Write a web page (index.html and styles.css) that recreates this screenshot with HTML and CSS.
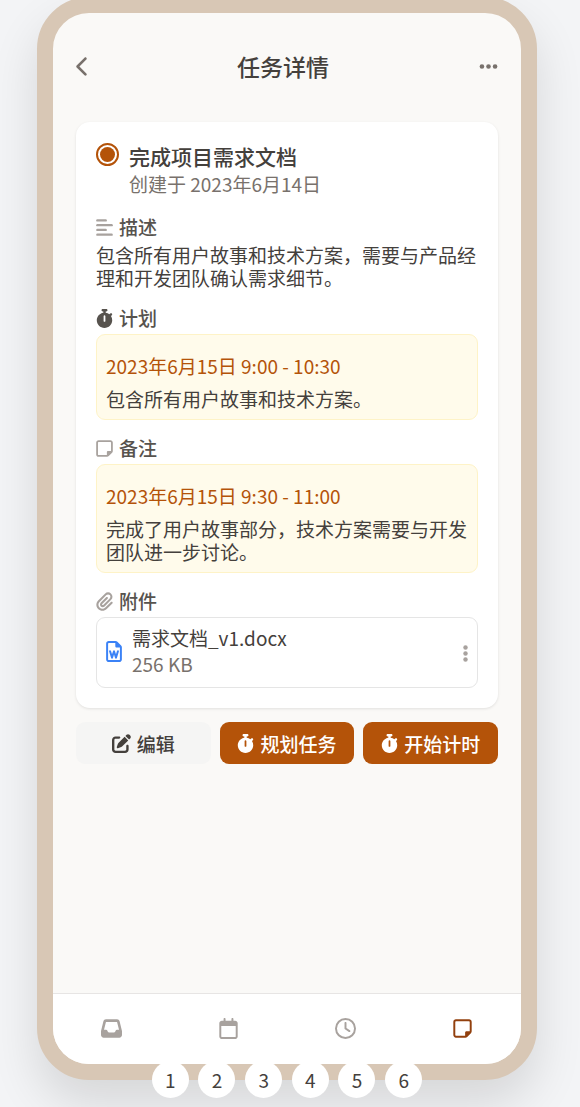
FILE: index.html
```html
<!DOCTYPE html>
<html lang="zh-CN">
<head>
<meta charset="utf-8">
<meta name="viewport" content="width=device-width, initial-scale=1">
<title>任务详情</title>
<link rel="stylesheet" href="styles.css">
</head>
<body>
<svg class="sprite" aria-hidden="true">
  <symbol id="stopwatch" viewBox="0 0 448 512"><path d="M176 0c-17.7 0-32 14.3-32 32s14.3 32 32 32l16 0 0 34.4C92.3 113.8 16 200 16 304c0 114.9 93.1 208 208 208s208-93.1 208-208c0-41.8-12.3-80.7-33.5-113.2l24.1-24.1c12.5-12.5 12.5-32.8 0-45.3s-32.8-12.5-45.3 0L355.7 143c-28.1-23-62.2-38.8-99.7-44.6L256 64l16 0c17.7 0 32-14.3 32-32s-14.3-32-32-32L224 0 176 0zm72 192l0 128c0 13.3-10.7 24-24 24s-24-10.7-24-24l0-128c0-13.3 10.7-24 24-24s24 10.7 24 24z"/></symbol>
  <symbol id="note" viewBox="0 0 448 512"><path d="M64 80c-8.8 0-16 7.2-16 16l0 320c0 8.8 7.2 16 16 16l224 0 0-80c0-17.7 14.3-32 32-32l80 0 0-224c0-8.8-7.2-16-16-16L64 80zM288 480L64 480c-35.3 0-64-28.7-64-64L0 96C0 60.7 28.7 32 64 32l320 0c35.3 0 64 28.7 64 64l0 224 0 5.5c0 17-6.7 33.3-18.7 45.3l-90.5 90.5c-12 12-28.3 18.7-45.3 18.7l-5.5 0z"/></symbol>
</svg>

<div class="phone">
  <header class="topbar">
    <button class="icon-button" type="button" aria-label="返回">
      <svg class="icon-back" viewBox="0 0 256 512"><path d="M9.4 233.4c-12.5 12.5-12.5 32.8 0 45.3l192 192c12.5 12.5 32.8 12.5 45.3 0s12.5-32.8 0-45.3L77.3 256 246.6 86.6c12.5-12.5 12.5-32.8 0-45.3s-32.8-12.5-45.3 0l-192 192z"/></svg>
    </button>
    <h1 class="topbar-title">任务详情</h1>
    <button class="icon-button" type="button" aria-label="更多">
      <svg class="icon-more" viewBox="0 0 448 512"><circle cx="64" cy="256" r="56"/><circle cx="224" cy="256" r="56"/><circle cx="384" cy="256" r="56"/></svg>
    </button>
  </header>

  <main class="content">
    <article class="card">
      <div class="task">
        <input class="task-radio" type="radio" id="task" checked>
        <div>
          <label class="task-title" for="task">完成项目需求文档</label>
          <p class="task-date">创建于 2023年6月14日</p>
        </div>
      </div>

      <section class="section">
        <h2 class="section-title">
          <svg class="icon icon-muted" viewBox="0 0 448 512"><rect y="32" width="288" height="64" rx="32"/><rect y="160" width="448" height="64" rx="32"/><rect y="288" width="288" height="64" rx="32"/><rect y="416" width="448" height="64" rx="32"/></svg>
          描述
        </h2>
        <p class="text">包含所有用户故事和技术方案，需要与产品经理和开发团队确认需求细节。</p>
      </section>

      <section class="section">
        <h2 class="section-title">
          <svg class="icon"><use href="#stopwatch"/></svg>
          计划
        </h2>
        <div class="slot">
          <p class="slot-time">2023年6月15日 9:00 - 10:30</p>
          <p class="text">包含所有用户故事和技术方案。</p>
        </div>
      </section>

      <section class="section">
        <h2 class="section-title">
          <svg class="icon icon-muted"><use href="#note"/></svg>
          备注
        </h2>
        <div class="slot">
          <p class="slot-time">2023年6月15日 9:30 - 11:00</p>
          <p class="text">完成了用户故事部分，技术方案需要与开发团队进一步讨论。</p>
        </div>
      </section>

      <section class="section">
        <h2 class="section-title">
          <svg class="icon icon-muted" viewBox="0 0 448 512"><path d="M364.2 83.8c-24.4-24.4-64-24.4-88.4 0l-184 184c-42.1 42.1-42.1 110.3 0 152.4s110.3 42.1 152.4 0l152-152c10.9-10.9 28.7-10.9 39.6 0s10.9 28.7 0 39.6l-152 152c-64 64-167.6 64-231.6 0s-64-167.6 0-231.6l184-184c46.3-46.3 121.3-46.3 167.6 0s46.3 121.3 0 167.6l-176 176c-28.6 28.6-75 28.6-103.6 0s-28.6-75 0-103.6l144-144c10.9-10.9 28.7-10.9 39.6 0s10.9 28.7 0 39.6l-144 144c-6.7 6.7-6.7 17.7 0 24.4s17.7 6.7 24.4 0l176-176c24.4-24.4 24.4-64 0-88.4z"/></svg>
          附件
        </h2>
        <div class="file">
          <svg class="icon-word" viewBox="0 0 384 512"><path d="M48 448L48 64c0-8.800 7.200-16 16-16l160 0 0 80c0 17.700 14.300 32 32 32l80 0 0 288c0 8.800-7.200 16-16 16L64 464c-8.800 0-16-7.200-16-16zM64 0C28.700 0 0 28.700 0 64L0 448c0 35.300 28.700 64 64 64l256 0c35.300 0 64-28.700 64-64l0-293.500c0-17-6.700-33.300-18.700-45.300L274.700 18.700C262.700 6.700 246.500 0 229.500 0L64 0zm55 241.100c-3.800-12.700-17.200-19.900-29.900-16.100s-19.900 17.200-16.100 29.900l48 160c3 10.200 12.400 17.100 23 17.100s19.900-7 23-17.100l25-83.400 25 83.400c3 10.200 12.400 17.100 23 17.100s19.900-7 23-17.100l48-160c3.800-12.700-3.400-26.100-16.100-29.900s-26.100 3.400-29.900 16.100l-25 83.400-25-83.400c-3-10.200-12.400-17.100-23-17.100s-19.900 7-23 17.100l-25 83.400-25-83.400z"/></svg>
          <div class="file-info">
            <p class="file-name">需求文档_v1.docx</p>
            <p class="file-size">256 KB</p>
          </div>
          <button class="icon-button file-menu" type="button" aria-label="附件操作">
            <svg class="icon-dots" viewBox="0 0 128 512"><circle cx="64" cy="96" r="60"/><circle cx="64" cy="256" r="60"/><circle cx="64" cy="416" r="60"/></svg>
          </button>
        </div>
      </section>
    </article>

    <div class="actions">
      <button class="action" type="button">
        <svg class="icon icon-wide" viewBox="0 0 512 512"><path d="M471.6 21.7c-21.900-21.900-57.300-21.900-79.200 0L362.300 51.700l97.900 97.900 30.100-30.100c21.900-21.900 21.900-57.300 0-79.200L471.600 21.700zm-299.200 220c-6.100 6.100-10.800 13.600-13.500 21.900l-29.600 88.800c-2.900 8.600-.6 18.100 5.800 24.600s15.900 8.700 24.600 5.800l88.800-29.600c8.200-2.700 15.700-7.400 21.900-13.500L437.700 172.300 339.700 74.300 172.400 241.700zM96 64C43 64 0 107 0 160L0 416c0 53 43 96 96 96l256 0c53 0 96-43 96-96l0-96c0-17.700-14.300-32-32-32s-32 14.300-32 32l0 96c0 17.700-14.300 32-32 32L96 448c-17.700 0-32-14.300-32-32l0-256c0-17.700 14.300-32 32-32l96 0c17.700 0 32-14.300 32-32s-14.300-32-32-32L96 64z"/></svg>
        编辑
      </button>
      <button class="action action-primary" type="button">
        <svg class="icon"><use href="#stopwatch"/></svg>
        规划任务
      </button>
      <button class="action action-primary" type="button">
        <svg class="icon"><use href="#stopwatch"/></svg>
        开始计时
      </button>
    </div>
  </main>

  <nav class="tabs">
    <a class="tab" href="#inbox" aria-label="收件箱"><svg class="tab-icon" viewBox="0 0 512 512"><path d="M121 32C91.600 32 66 52 58.900 80.500L1.900 308.400C.6 313.500 0 318.700 0 323.900L0 416c0 35.300 28.700 64 64 64l384 0c35.300 0 64-28.700 64-64l0-92.100c0-5.200-.6-10.400-1.900-15.500l-57-227.900C446 52 420.400 32 391 32L121 32zm0 64l270 0 48 192-51.200 0c-12.100 0-23.200 6.800-28.600 17.700l-14.300 28.600c-5.400 10.800-16.500 17.700-28.600 17.700l-120.400 0c-12.100 0-23.200-6.800-28.600-17.700l-14.300-28.600c-5.400-10.800-16.500-17.700-28.600-17.700L73 288 121 96z"/></svg></a>
    <a class="tab" href="#calendar" aria-label="日历"><svg class="tab-icon" viewBox="0 0 448 512"><path d="M152 24c0-13.300-10.700-24-24-24s-24 10.700-24 24l0 40L64 64C28.700 64 0 92.700 0 128l0 16 0 48L0 448c0 35.300 28.700 64 64 64l320 0c35.300 0 64-28.700 64-64l0-256 0-48 0-16c0-35.300-28.700-64-64-64l-40 0 0-40c0-13.300-10.700-24-24-24s-24 10.700-24 24l0 40L152 64l0-40zM48 192l352 0 0 256c0 8.800-7.200 16-16 16L64 464c-8.800 0-16-7.200-16-16l0-256z"/></svg></a>
    <a class="tab" href="#timer" aria-label="计时"><svg class="tab-icon" viewBox="0 0 512 512"><path d="M464 256A208 208 0 1 1 48 256a208 208 0 1 1 416 0zM0 256a256 256 0 1 0 512 0A256 256 0 1 0 0 256zM232 120l0 136c0 8 4 15.500 10.700 20l96 64c11 7.400 25.900 4.400 33.300-6.700s4.400-25.900-6.700-33.300L280 243.200 280 120c0-13.300-10.700-24-24-24s-24 10.700-24 24z"/></svg></a>
    <a class="tab tab-active" href="#notes" aria-label="笔记" aria-current="page"><svg class="tab-icon"><use href="#note"/></svg></a>
  </nav>
</div>

<div class="pager">
  <button class="pager-dot" type="button">1</button>
  <button class="pager-dot" type="button">2</button>
  <button class="pager-dot" type="button">3</button>
  <button class="pager-dot" type="button">4</button>
  <button class="pager-dot" type="button">5</button>
  <button class="pager-dot" type="button">6</button>
</div>
</body>
</html>
```
FILE: styles.css
```css
* {
  box-sizing: border-box;
}

body {
  position: relative;
  display: flow-root;
  min-height: 100vh;
  margin: 0;
  padding: 0 43px 0 37px;
  overflow-x: hidden;
  background: #f3f4f6;
  color: #44403c;
  font-family: "Noto Sans CJK SC", sans-serif;
  font-size: 19px;
  line-height: 23px;
}

h1, h2, p {
  margin: 0;
}

button {
  padding: 0;
  border: 0;
  background: none;
  color: inherit;
  font: inherit;
  cursor: pointer;
}

svg {
  display: block;
  fill: currentColor;
}

.sprite {
  position: absolute;
  width: 0;
  height: 0;
}

.phone {
  display: flex;
  flex-direction: column;
  max-width: 500px;
  min-height: calc(100vh - 24px);
  margin: -3px auto 0;
  overflow: hidden;
  border: 16px solid #d8c7b5;
  border-radius: 52px;
  background: #faf9f7;
  box-shadow: 0 24px 48px rgba(0, 0, 0, 0.12);
}

.topbar {
  display: flex;
  align-items: center;
  justify-content: space-between;
  padding: 37px 23px 39px;
}

.topbar-title {
  font-size: 23px;
  font-weight: 500;
  line-height: 33px;
}

.icon-button {
  color: #78716c;
}

.icon-back {
  width: 11px;
  height: 21px;
}

.icon-more {
  width: 19px;
  height: 21px;
}

.content {
  flex: 1;
  padding: 0 23px;
}

.card {
  padding: 20px;
  border-radius: 14px;
  background: #fff;
  box-shadow: 0 1px 3px rgba(0, 0, 0, 0.1);
}

.task {
  display: flex;
  gap: 10px;
  margin-bottom: 15px;
}

.task-radio {
  appearance: none;
  flex: none;
  width: 23px;
  height: 23px;
  margin: 1px 0 0;
  border: 2px solid #b45309;
  border-radius: 50%;
}

.task-radio:checked {
  padding: 2px;
  background: #b45309 content-box;
}

.task-title {
  display: block;
  font-size: 21px;
  font-weight: 500;
  line-height: 28px;
}

.task-date {
  color: #78716c;
  line-height: 28px;
}

.section + .section {
  margin-top: 14px;
}

.section > .text {
  padding-bottom: 1px;
}

.section-title {
  display: flex;
  align-items: center;
  gap: 6px;
  margin-bottom: 2px;
  color: #57534e;
  font-size: 19px;
  font-weight: 500;
  line-height: 28px;
}

.icon {
  width: 17px;
  height: 19px;
}

.icon-wide {
  width: 19px;
}

.icon-muted {
  color: #a8a29e;
}

.slot {
  padding: 17px 9px 9px;
  border: 1px solid #fef3c7;
  border-radius: 9px;
  background: #fffbeb;
}

.slot-time {
  margin-bottom: 7px;
  color: #b45309;
  line-height: 28px;
}

.file {
  display: flex;
  align-items: center;
  gap: 10px;
  padding: 7px 9px 10px;
  border: 1px solid #e5e5e5;
  border-radius: 9px;
}

.icon-word {
  width: 16px;
  height: 21px;
  color: #3b82f6;
}

.file-info {
  flex: 1;
  line-height: 26px;
}

.file-size {
  color: #78716c;
}

.file-menu {
  padding-top: 4px;
}

.icon-dots {
  width: 5px;
  height: 19px;
  color: #a8a29e;
}

.actions {
  display: grid;
  grid-template-columns: repeat(3, 1fr);
  gap: 9px;
  margin-top: 14px;
}

.action {
  display: flex;
  align-items: center;
  justify-content: center;
  gap: 6px;
  height: 42px;
  border-radius: 9px;
  background: #f5f5f4;
  font-weight: 500;
}

.action-primary {
  background: #b45309;
  color: #fff;
}

.tabs {
  display: grid;
  grid-template-columns: repeat(4, 1fr);
  border-top: 1px solid #e7e5e4;
  background: #fff;
}

.tab {
  display: flex;
  justify-content: center;
  padding: 24px 0 25px;
  color: #a8a29e;
}

.tab-active {
  color: #92400e;
}

.tab-icon {
  width: 21px;
  height: 21px;
}

/* Page switcher floating over the lower edge of the phone */
.pager {
  position: absolute;
  right: 43px;
  bottom: 9px;
  left: 37px;
  display: grid;
  grid-template-columns: repeat(6, 1fr);
  justify-items: center;
  max-width: 280px;
  margin: 0 auto;
}

.pager-dot {
  width: 37px;
  height: 37px;
  border-radius: 50%;
  background: #fff;
}
```
